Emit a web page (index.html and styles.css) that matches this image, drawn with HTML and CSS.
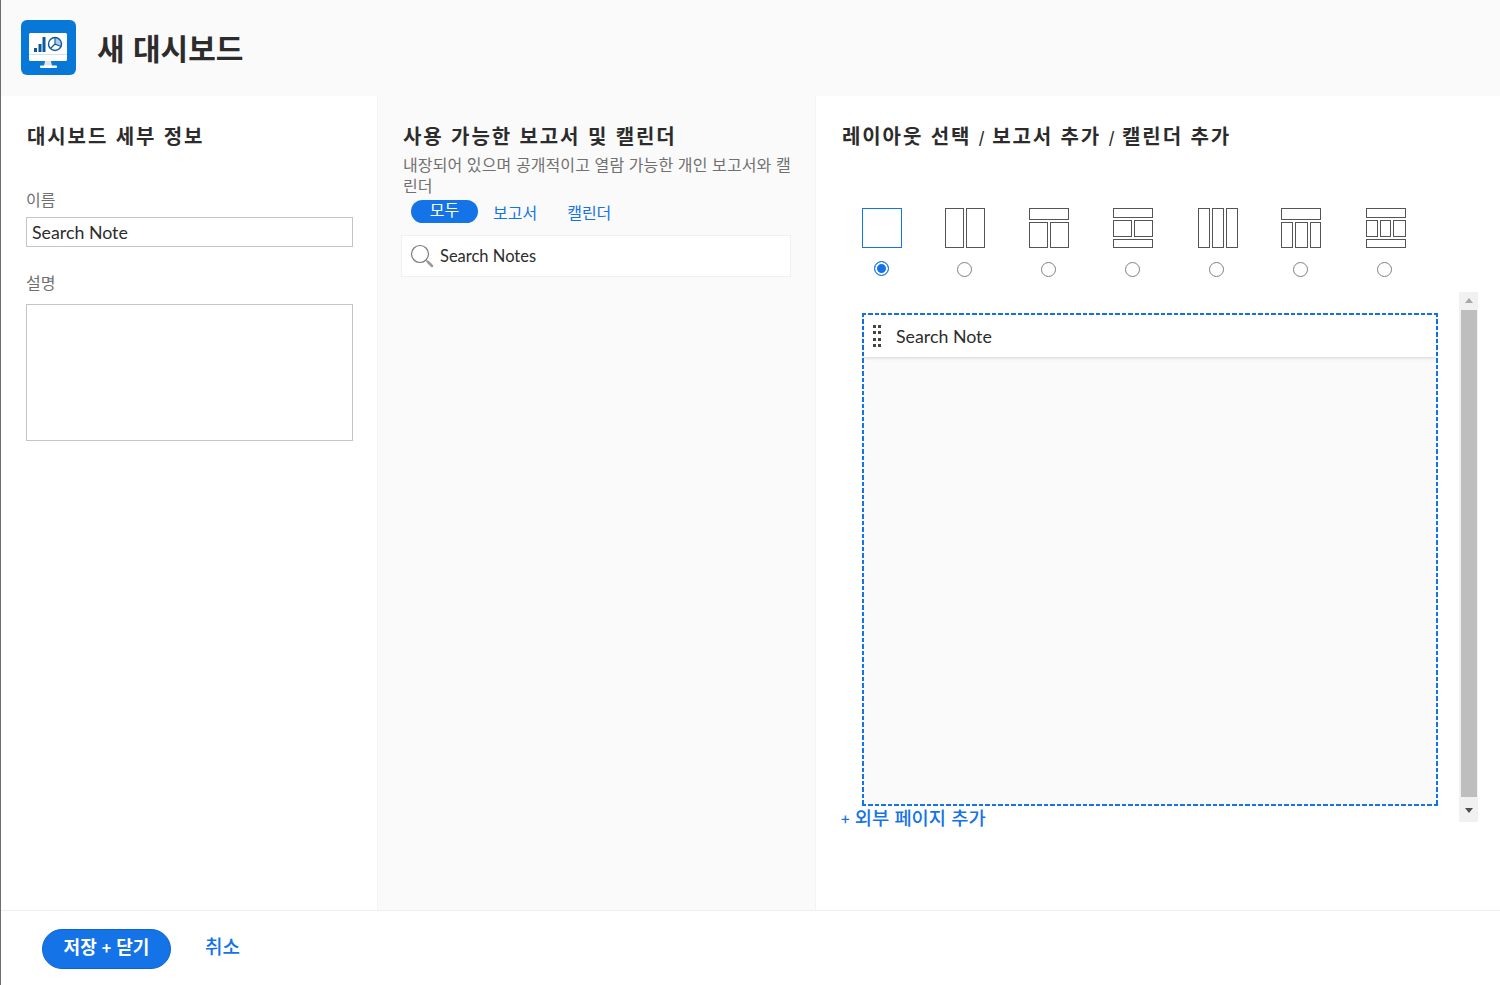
FILE: index.html
```html
<!DOCTYPE html>
<html lang="ko">

<head>
    <meta charset="UTF-8">
    <meta name="viewport" content="width=device-width, initial-scale=1.0">
    <title>새 대시보드</title>

    <link rel="stylesheet" href="styles.css">
</head>

<body>
    <div class="page">
        <header class="top">
            <svg class="logo" width="55" height="55" viewBox="0 0 55 55">
                <rect width="55" height="55" rx="6" fill="#0878d8"/>
                <rect x="8" y="13" width="38" height="28" rx="1.5" fill="#fff"/>
                <rect x="8" y="34" width="38" height="1" fill="#cfe3f5"/>
                <path d="M24 41h6l1 5h-8z" fill="#e4e4e4"/>
                <rect x="19" y="45.500" width="17" height="2.500" rx="1" fill="#fff"/>
                <rect x="13" y="28" width="3" height="4" fill="#0b5a9e"/>
                <rect x="17.500" y="24" width="3" height="8" fill="#0b5a9e"/>
                <rect x="21.500" y="17" width="3" height="15" fill="#0b5a9e"/>
                <path d="M34.500 18a6 6 0 0 1 5.500 8l-5.500-2z" fill="#a9cdea"/>
                <circle cx="34" cy="24" r="6.500" fill="none" stroke="#0b5a9e" stroke-width="1.400"/>
                <path d="M34 17.500v6.500l6 2.500M34 24l-4.500 4.500" fill="none" stroke="#0b5a9e" stroke-width="1.200"/>
            </svg>
            <h1 class="title">새 대시보드</h1>
        </header>

        <main class="cols">
            <section class="col col-details">
                <h2 class="col-title">대시보드 세부 정보</h2>
                <label class="field-label label-name" for="name">이름</label>
                <input class="text-input" id="name" type="text" value="Search Note">
                <label class="field-label label-desc" for="desc">설명</label>
                <textarea class="text-area" id="desc"></textarea>
            </section>

            <section class="col col-reports">
                <h2 class="col-title">사용 가능한 보고서 및 캘린더</h2>
                <p class="col-sub">내장되어 있으며 공개적이고 열람 가능한 개인 보고서와 캘린더</p>
                <div class="tabs">
                    <span class="tab tab-active">모두</span>
                    <a class="tab tab-report">보고서</a>
                    <a class="tab tab-cal">캘린더</a>
                </div>
                <div class="search">
                    <svg width="24" height="24" viewBox="0 0 24 24">
                        <circle cx="10" cy="10" r="8.500" fill="none" stroke="#777" stroke-width="1.200"/>
                        <path d="M16.500 16.500l1.500 1.500" stroke="#777" stroke-width="1.200"/>
                        <path d="M18 18l4 4" stroke="#999" stroke-width="2.500" stroke-linecap="round"/>
                    </svg>
                    <span>Search Notes</span>
                </div>
            </section>

            <section class="col col-layout">
                <h2 class="col-title">레이아웃 선택 <span class="sep">/</span> 보고서 추가 <span class="sep">/</span> 캘린더 추가</h2>

                <div class="layouts">
                    <label class="layout layout-first">
                        <svg class="layout-pic layout-pic-on" width="40" height="40" viewBox="0 0 40 40">
                            <rect x=".5" y=".5" width="39" height="39"/>
                        </svg>
                        <span class="radio radio-on"></span>
                    </label>
                    <label class="layout">
                        <svg class="layout-pic nudge" width="40" height="40" viewBox="0 0 40 40">
                            <rect x=".5" y=".5" width="18" height="39"/>
                            <rect x="21.500" y=".5" width="18" height="39"/>
                        </svg>
                        <span class="radio"></span>
                    </label>
                    <label class="layout">
                        <svg class="layout-pic nudge" width="40" height="40" viewBox="0 0 40 40">
                            <rect x=".5" y=".5" width="39" height="11"/>
                            <rect x=".5" y="14.500" width="18" height="25"/>
                            <rect x="21.500" y="14.500" width="18" height="25"/>
                        </svg>
                        <span class="radio"></span>
                    </label>
                    <label class="layout">
                        <svg class="layout-pic nudge" width="40" height="40" viewBox="0 0 40 40">
                            <rect x=".5" y=".5" width="39" height="9"/>
                            <rect x=".5" y="12.500" width="18" height="16"/>
                            <rect x="21.500" y="12.500" width="18" height="16"/>
                            <rect x=".5" y="31.500" width="39" height="8"/>
                        </svg>
                        <span class="radio"></span>
                    </label>
                    <label class="layout">
                        <svg class="layout-pic" width="40" height="40" viewBox="0 0 40 40">
                            <rect x=".5" y=".5" width="11" height="39"/>
                            <rect x="14.500" y=".5" width="11" height="39"/>
                            <rect x="28.500" y=".5" width="11" height="39"/>
                        </svg>
                        <span class="radio"></span>
                    </label>
                    <label class="layout">
                        <svg class="layout-pic nudge" width="40" height="40" viewBox="0 0 40 40">
                            <rect x=".5" y=".5" width="39" height="11"/>
                            <rect x=".5" y="14.500" width="11" height="25"/>
                            <rect x="14.500" y="14.500" width="12" height="25"/>
                            <rect x="29.500" y="14.500" width="10" height="25"/>
                        </svg>
                        <span class="radio"></span>
                    </label>
                    <label class="layout">
                        <svg class="layout-pic" width="40" height="40" viewBox="0 0 40 40">
                            <rect x=".5" y=".5" width="39" height="9"/>
                            <rect x=".5" y="12.500" width="11" height="16"/>
                            <rect x="14.500" y="12.500" width="10" height="16"/>
                            <rect x="27.500" y="12.500" width="12" height="16"/>
                            <rect x=".5" y="31.500" width="39" height="8"/>
                        </svg>
                        <span class="radio"></span>
                    </label>
                </div>

                <div class="board">
                    <div class="board-main">
                        <div class="dropzone">
                            <div class="widget-head">
                                <span class="grip"><i></i><i></i><i></i><i></i><i></i><i></i><i></i><i></i></span>
                                <span>Search Note</span>
                            </div>
                        </div>
                        <a class="add-page"><span class="plus">+</span> 외부 페이지 추가</a>
                    </div>
                    <div class="scrollbar">
                        <span class="arrow arrow-up"></span>
                        <span class="thumb"></span>
                        <span class="arrow arrow-down"></span>
                    </div>
                </div>
            </section>
        </main>

        <footer class="bottom">
            <button class="btn-save" type="button">저장 <span class="btn-plus">+</span> 닫기</button>
            <a class="btn-cancel">취소</a>
        </footer>
    </div>
</body>

</html>
```

FILE: styles.css
```css
* {
    box-sizing: border-box;
}

body {
    margin: 0;
    background-color: white;
    color: #2c2c2c;
    font-family: Lato, "Noto Sans CJK KR", sans-serif;
}

.page {
    display: flex;
    flex-direction: column;
    height: 985px;
    border-left: 1px solid #6e6e6e;
    overflow: hidden;
}

/* top bar */
.top {
    display: flex;
    align-items: center;
    height: 96px;
    padding-left: 20px;
    padding-bottom: 1px;
    background-color: #fafafa;
}

.title {
    margin: 0 0 2px 21px;
    font-family: "Noto Sans CJK KR", sans-serif;
    font-size: 30px;
    font-weight: 700;
    line-height: 40px;
}

/* three columns */
.cols {
    flex: 1;
    display: grid;
    grid-template-columns: 376px 439px 1fr;
    min-height: 0;
}

.col {
    min-width: 0;
    padding-top: 26px;
}

.col-title {
    margin: 0;
    font-family: "Noto Sans CJK KR", sans-serif;
    font-size: 20px;
    font-weight: 700;
    line-height: 28px;
    letter-spacing: 1.9px;
}

.col-details .col-title,
.col-layout .col-title {
    margin-left: 1px;
}

.sep {
    font-size: 15px;
    letter-spacing: 0;
}

.col-details {
    padding-left: 25px;
    padding-right: 24px;
}

.field-label {
    display: block;
    color: #707070;
    font-family: "Noto Sans CJK KR", sans-serif;
    font-size: 16px;
    line-height: 20px;
}

.label-name {
    margin-top: 39px;
    margin-bottom: 8px;
}

.label-desc {
    margin-top: 25px;
    margin-bottom: 12px;
}

.text-input,
.text-area {
    display: block;
    width: 100%;
    border: 1px solid #c4c4c4;
    background-color: white;
    border-radius: 0;
    color: #2c2c2c;
    font-family: inherit;
    font-size: 17.800px;
}

.text-input {
    height: 30px;
    padding: 0 5px;
}

.text-area {
    height: 137px;
    resize: none;
}

.col-reports {
    padding-left: 25px;
    padding-right: 20px;
    background-color: #fafafa;
    border-left: 1px solid #f3f3f3;
    border-right: 1px solid #f3f3f3;
}

.col-sub {
    margin: 4px 0 0;
    color: #707070;
    font-family: "Noto Sans CJK KR", sans-serif;
    font-size: 16px;
    line-height: 21px;
    letter-spacing: 0.1px;
}

.tabs {
    display: flex;
    align-items: center;
    height: 24px;
    margin-top: 3px;
    margin-left: 8px;
    font-family: "Noto Sans CJK KR", sans-serif;
    font-size: 16px;
}

.tab {
    color: #1473e6;
}

.tab-active {
    width: 67px;
    height: 23px;
    border-radius: 12px;
    background-color: #1473e6;
    color: white;
    line-height: 19px;
    text-align: center;
}

.tab-report {
    margin-left: 15px;
    padding-top: 2px;
}

.tab-cal {
    margin-left: 30px;
    padding-top: 2px;
}

.search {
    display: flex;
    align-items: center;
    gap: 6px;
    width: 390px;
    height: 42px;
    margin-top: 12px;
    margin-left: -2px;
    padding-left: 8px;
    border: 1px solid #f0f0f0;
    background-color: white;
    font-size: 16.500px;
}

.col-layout {
    padding-left: 25px;
}

.layouts {
    display: flex;
    margin-top: 56px;
    margin-left: -1px;
}

.layout {
    display: flex;
    flex-direction: column;
    align-items: center;
    width: 84px;
}

.layout-pic {
    fill: none;
    stroke: #555;
}

.layout-pic-on {
    stroke: #1473e6;
}

.nudge {
    margin-right: 2px;
}

.radio {
    width: 15px;
    height: 15px;
    margin-top: 14px;
    margin-right: 4px;
    border: 1.500px solid #808080;
    border-radius: 50%;
}

.layout-first .radio {
    margin-right: 2px;
}

.radio-on {
    margin-top: 13px;
    border-color: #1473e6;
    background-color: #1473e6;
    box-shadow: inset 0 0 0 2px white;
}

.board {
    display: flex;
    align-items: flex-start;
    margin-top: 15px;
}

.board-main {
    width: 618px;
    padding-top: 21px;
}

.dropzone {
    width: 576px;
    height: 493px;
    margin-left: 21px;
    padding: 2px;
    background:
        repeating-linear-gradient(90deg, #1473e6 0 4.500px, transparent 4.500px 6.500px) top / 100% 2px no-repeat,
        repeating-linear-gradient(90deg, #1473e6 0 4.500px, transparent 4.500px 6.500px) bottom / 100% 2px no-repeat,
        repeating-linear-gradient(180deg, #1473e6 0 4.500px, transparent 4.500px 6.500px) left / 2px 100% no-repeat,
        repeating-linear-gradient(180deg, #1473e6 0 4.500px, transparent 4.500px 6.500px) right / 2px 100% no-repeat,
        #fafafa;
}

.widget-head {
    display: flex;
    align-items: center;
    height: 42px;
    padding-left: 9px;
    gap: 15px;
    background-color: white;
    box-shadow: 0 1px 3px rgba(0, 0, 0, 0.16);
    font-size: 17.800px;
}

.grip {
    display: grid;
    grid-template-columns: 3px 3px;
    gap: 3.500px 2px;
}

.grip i {
    width: 3px;
    height: 3px;
    background-color: #444;
}

.add-page {
    display: block;
    color: #1473e6;
    font-family: "Noto Sans CJK KR", sans-serif;
    font-size: 18.700px;
    font-weight: 500;
    line-height: 22px;
}

.plus {
    font-size: 15px;
}

.scrollbar {
    display: flex;
    flex-direction: column;
    align-items: center;
    width: 19px;
    height: 530px;
    background-color: #f1f1f1;
}

.thumb {
    width: 16px;
    height: 487px;
    background-color: #bebebe;
}

.arrow {
    width: 0;
    height: 0;
    border-left: 4px solid transparent;
    border-right: 4px solid transparent;
}

.arrow-up {
    margin-top: 6px;
    margin-bottom: 7px;
    border-bottom: 5px solid #a8a8a8;
}

.arrow-down {
    margin-top: 11px;
    border-top: 5px solid #505050;
}

/* footer */
.bottom {
    display: flex;
    align-items: center;
    height: 75px;
    padding-top: 2px;
    padding-left: 41px;
    border-top: 1px solid #eeeeee;
    background-color: white;
}

.btn-save {
    width: 129px;
    height: 40px;
    border: 1px solid #0d66d0;
    border-radius: 20px;
    background-color: #1473e6;
    color: white;
    font-family: "Noto Sans CJK KR", sans-serif;
    font-size: 18px;
    font-weight: 700;
    padding: 0 0 6px;
}

.btn-plus {
    font-size: 16px;
}

.btn-cancel {
    margin-left: 34px;
    margin-bottom: 8px;
    color: #1473e6;
    font-family: "Noto Sans CJK KR", sans-serif;
    font-size: 19px;
    font-weight: 500;
}
```
